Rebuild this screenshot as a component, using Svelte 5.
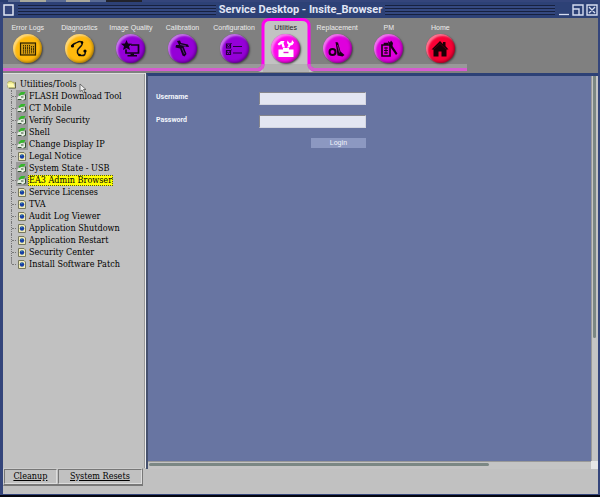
<script lang="ts">
  interface Tab {
    label: string;
    icon: string;
    tone: string;
  }

  interface Tool {
    label: string;
    launch: boolean;
  }

  const tabs: Tab[] = [
    { label: 'Error Logs', icon: 'logs', tone: 'amber' },
    { label: 'Diagnostics', icon: 'scope', tone: 'amber' },
    { label: 'Image Quality', icon: 'image', tone: 'violet' },
    { label: 'Calibration', icon: 'caliper', tone: 'violet' },
    { label: 'Configuration', icon: 'list', tone: 'violet' },
    { label: 'Utilities', icon: 'toolbox', tone: 'pink' },
    { label: 'Replacement', icon: 'wrench', tone: 'magenta' },
    { label: 'PM', icon: 'clipboard', tone: 'magenta' },
    { label: 'Home', icon: 'home', tone: 'red' }
  ];

  const tools: Tool[] = [
    { label: 'FLASH Download Tool', launch: true },
    { label: 'CT Mobile', launch: true },
    { label: 'Verify Security', launch: true },
    { label: 'Shell', launch: true },
    { label: 'Change Display IP', launch: true },
    { label: 'Legal Notice', launch: false },
    { label: 'System State - USB', launch: true },
    { label: 'EA3 Admin Browser', launch: true },
    { label: 'Service Licenses', launch: false },
    { label: 'TVA', launch: false },
    { label: 'Audit Log Viewer', launch: false },
    { label: 'Application Shutdown', launch: false },
    { label: 'Application Restart', launch: false },
    { label: 'Security Center', launch: false },
    { label: 'Install Software Patch', launch: false }
  ];

  let activeTab = $state('Utilities');
  let selected = $state('EA3 Admin Browser');
  let username = $state('');
  let password = $state('');

  function pick(event: MouseEvent, label: string) {
    event.preventDefault();
    selected = label;
  }
</script>

<div class="desktop-strip"></div>
<div class="window">
  <header class="titlebar">
    <div class="side">
      <button class="win-btn" aria-label="Window menu">
        <svg width="12" height="12" viewBox="0 0 12 12"><rect x="1" y="1" width="9" height="10" fill="#34457b" stroke="#e2e7f5" stroke-width="1.5" /></svg>
      </button>
      <span class="stripes"></span>
    </div>
    <h1>Service Desktop - Insite_Browser</h1>
    <div class="side">
      <span class="stripes"></span>
      <div class="win-group">
        <button class="win-btn" aria-label="Minimize">
          <svg width="12" height="12" viewBox="0 0 12 12"><path d="M1 10.5h10" stroke="#d5dcf0" stroke-width="1.3" /></svg>
        </button>
        <button class="win-btn" aria-label="Maximize">
          <svg width="12" height="12" viewBox="0 0 12 12"><path d="M1 1h10v10H1zM1 5h6v6" fill="none" stroke="#d5dcf0" stroke-width="1.4" /></svg>
        </button>
        <button class="win-btn" aria-label="Close">
          <svg width="12" height="12" viewBox="0 0 12 12"><path d="M1 1h10v10H1zM3 3l6 6M9 3l-6 6" fill="none" stroke="#d5dcf0" stroke-width="1.4" /></svg>
        </button>
      </div>
    </div>
  </header>

  <nav class="toolbar">
    <div class="tabs">
      {#each tabs as tab (tab.label)}
        <button class="tab" class:active={tab.label === activeTab} onclick={() => (activeTab = tab.label)}>
          {#if tab.label === activeTab}
            <svg class="tab-frame" viewBox="0 0 56 54" preserveAspectRatio="none">
              <path d="M0 54Q5 53 5 47V8Q5 1 12 1H44Q51 1 51 8V47Q51 53 56 54Z" fill="#c2c2c2" />
              <path d="M5 46H51V54H5Z" fill="#b2b2b2" />
              <path d="M0 51.5Q5 51 5 46V8Q5 1.5 12 1.5H44Q51 1.5 51 8V46Q51 51 56 51.5" fill="none" stroke="#ff00f0" stroke-width="3" />
              <path d="M0 51.5Q5 51 5 46M51 46Q51 51 56 51.5" fill="none" stroke="#d65bd0" stroke-width="3" />
            </svg>
          {/if}
          <span class="tab-label">{tab.label}</span>
          <span class="ball {tab.tone}">
            <svg width="20" height="20" viewBox="0 0 20 20">
              {#if tab.icon === 'logs'}
                <rect x="2.5" y="4" width="15" height="12" fill="#d29a12" stroke="#2b2000" stroke-width="1.2" />
                <path d="M5.500 6v8.500M7.500 6v8.500M9.500 6v8.500M11.500 6v8.500M13.500 7v7.500M15.500 7v7.500" stroke="#3b2c00" stroke-width="1" stroke-dasharray="1.5 .6 2.5 .6" />
              {:else if tab.icon === 'scope'}
                <path d="M3 7.500C3 4.500 6.500 4.500 8 3.500C11 1.500 14 2.500 13 5.500C12 8 9 9 8.500 11.500C8 14.500 9.500 16.500 12 16.500C15.500 17 17 15 16 12.500" fill="none" stroke="#111" stroke-width="1.5" />
                <circle cx="3.500" cy="7" r="1.600" /><circle cx="13" cy="3.500" r="1.300" /><circle cx="16" cy="12" r="1.600" /><circle cx="10.500" cy="16" r="1.300" />
              {:else if tab.icon === 'image'}
                <path d="M10 6H17.500V14H5V10.500" fill="none" stroke="#100018" stroke-width="1.7" />
                <path d="M5.500 1L7 4.500L11 4.800L8 7.200L9 11L5.500 9L2 11L3 7.200L0 4.800L4 4.500ZM9.500 14.500h3.500v1.500h3v1.500H6.500v-1.500h3Z" fill="#100018" />
              {:else if tab.icon === 'caliper'}
                <path d="M5 2L8 1.500L9 4L16 5.500L17 8L11.500 7.500L14.500 15L12.500 17.500L10.500 16.500L8 9.500L3.500 8.500L4 6L7 6Z" fill="#160022" />
                <path d="M10 9l2.500 6M8 5.500l6 1.500" stroke="#7c2eb0" stroke-width=".7" />
              {:else if tab.icon === 'list'}
                <path d="M2.500 5h4v4H2.500zM2.500 11.500h4v4H2.500zM9 7.500h9M9 14h9" fill="none" stroke="#21003a" stroke-width="1.200" />
                <path d="M3 6l1.500 2 3-4M3 12.500l1.500 2 3-4" fill="none" stroke="#21003a" stroke-width="1" />
              {:else if tab.icon === 'toolbox'}
                <path d="M2.500 10.500H7V9H13V10.500H17.500V18H2.500Z" fill="#fff" />
                <path d="M7.500 13.500h5" fill="none" stroke="#e216d2" stroke-width="1.400" />
                <path d="M1.500 5L5 2H8.500L7.500 4L9 8.500H6.500L5.500 5L3 6.500ZM11 8.500L12.500 6L11 4L11.500 1.500L13.500 4L15.500 3.500L16 1L18 3.500L16.500 6L14.500 6.500L13.500 8.500Z" fill="#fff" />
              {:else if tab.icon === 'wrench'}
                <circle cx="5.500" cy="13" r="3" fill="none" stroke="#180015" stroke-width="2" />
                <path d="M8.500 3L11 3.500L13.500 12.500L17.500 16L15.500 17.500L10.500 16.500L9.500 9Z" fill="#180015" />
                <path d="M10.500 6l2 7.500" stroke="#a1209a" stroke-width=".8" />
              {:else if tab.icon === 'clipboard'}
                <path d="M3 6h8v11H3zM5.500 4.500h3V6h-3z" fill="none" stroke="#180015" stroke-width="1.600" />
                <path d="M5 9h4M5 11.500h4M5 14h4M7 8v7" stroke="#180015" stroke-width=".9" />
                <path d="M9 2L11 3.500L12 1.500L14 4L13.500 7L18.500 14.500L17 16L12 9L9.500 5Z" fill="#180015" />
              {:else}
                <path d="M10 2L13 5V3H15.500V7L18.500 10.500H16.500V17.500H11.500V12.500H8.500V17.500H3.500V10.500H1.500Z" fill="#190005" />
                <path d="M4 10L10 4.500L16 10" fill="none" stroke="#7b0018" stroke-width=".5" />
              {/if}
            </svg>
          </span>
        </button>
      {/each}
    </div>
  </nav>

  <div class="workspace">
    <aside class="sidebar">
      <div class="tree">
        <div class="root">
          <svg width="9" height="9" viewBox="0 0 10 9"><path d="M1 8V2L2 1h3l1 1h2v2" fill="#e8e48a" stroke="#99984b" stroke-width=".8" /><path d="M0 3.500H7L9 8.500H2Z" fill="#fffcae" /><path d="M9.500 2v6.500H2" fill="none" stroke="#55552c" /></svg>
          <span>Utilities/Tools</span>
          <svg class="pointer" width="8" height="11" viewBox="0 0 8 11"><path d="M1 1V8.500L3 7L4.500 10L6 9.300L4.500 6.500H7Z" fill="#eee" stroke="#555" stroke-width=".8" /></svg>
        </div>
        <ul>
          {#each tools as tool (tool.label)}
            <li>
              <span class="glyph" class:launch={tool.launch}>
                {#if tool.launch}
                  <svg width="10" height="10" viewBox="0 0 10 10"><path d="M1 5.500L4 4L8 4.500V9L3 9L0 7.500Z" fill="#e5eee2" /><path d="M1.500 3.500L4 1H8.500L7 3.500L4 4L2.500 5Z" fill="#35b62b" /><path d="M8.500 3.500V8.500L6.500 9M1 8.500L4.500 8.500M4 6L6.500 6" fill="none" stroke="#345034" stroke-width="1" /></svg>
                {:else}
                  <svg width="8" height="9" viewBox="0 0 8 9"><path d="M.5.5H6L7.500 2V8.500H.5Z" fill="#f2edb8" stroke="#77775d" /><circle cx="4" cy="4.500" r="2.200" fill="#173ea5" /><path d="M3 3l1.500-.5L4 4Z" fill="#58c7a0" /></svg>
                {/if}
              </span>
              <a href="#tool" class:selected={tool.label === selected} onclick={(e) => pick(e, tool.label)}>{tool.label}</a>
            </li>
          {/each}
        </ul>
      </div>
      <div class="actions">
        <a href="#cleanup">Cleanup</a>
        <a href="#resets">System Resets</a>
      </div>
    </aside>

    <section class="main">
      <div class="frame">
        <form class="login" onsubmit={(e) => e.preventDefault()}>
          <label for="username">Username</label>
          <input id="username" type="text" bind:value={username} />
          <label for="password">Password</label>
          <input id="password" type="password" bind:value={password} />
          <button type="submit">Login</button>
        </form>
        <div class="vbar"><span></span></div>
        <div class="hbar"><span></span></div>
        <div class="corner"></div>
      </div>
    </section>
  </div>
</div>

<style>
  :global(body) {
    margin: 0;
    background: #05060f;
  }

  :global(#app) {
    display: flex;
    flex-direction: column;
    min-height: 100vh;
  }

  .desktop-strip {
    height: 2px;
    background: linear-gradient(90deg, #283c70 0 8px, #5a6b93 8px 20px, #a9a99b 20px 46px, #5a6b93 46px 66px, #aaa79b 66px 90px, #5a6b93 90px 106px, #22232c 106px 142px, #34457b 142px);
  }

  .window {
    flex: 1;
    display: flex;
    flex-direction: column;
    box-sizing: border-box;
    margin-bottom: 2px;
    border: solid #34457b;
    border-width: 0 2px 1px 3px;
    background: #c1c1c1;
  }

  button {
    padding: 0;
    border: 0;
    background: none;
  }

  .titlebar {
    display: grid;
    grid-template-columns: 1fr auto 1fr;
    align-items: center;
    height: 16px;
    background: #2d4176;
  }

  .titlebar h1 {
    margin: 0 3px;
    font: bold 11px/16px Roboto, "Liberation Sans", sans-serif;
    color: #e1e6f5;
  }

  .side {
    display: flex;
    align-items: center;
    gap: 3px;
  }

  .win-btn {
    width: 12px;
    height: 12px;
  }

  .win-btn svg {
    display: block;
  }

  .win-group {
    display: flex;
    gap: 2px;
  }

  .stripes {
    flex: 1;
    height: 10px;
    background: repeating-linear-gradient(#17213f 0 1px, #344880 1px 3px);
  }

  .toolbar {
    height: 55px;
    background: #808080;
    overflow: hidden;
  }

  .tabs {
    display: grid;
    grid-template-columns: repeat(9, 1fr);
    width: 78%;
    height: 54px;
    background: linear-gradient(transparent 46px, #999 46px 50px, #d65bd0 50px 53px, #808080 53px);
  }

  .tab {
    position: relative;
    display: flex;
    flex-direction: column;
    align-items: center;
    padding: 4px 2px 0 0;
    font: 7px/12px "Liberation Sans", Arial, sans-serif;
    color: #ececec;
  }

  .tab.active {
    color: #222;
  }

  .tab-frame {
    position: absolute;
    top: 0;
    left: -3px;
    width: 56px;
    height: 54px;
  }

  .tab-label {
    position: relative;
    white-space: nowrap;
  }

  .ball {
    position: relative;
    display: grid;
    place-items: center;
    width: 29px;
    height: 29px;
    border-radius: 50%;
    box-shadow: 1px 1px 2px #444, inset 2px 2px 2px #ffffff77, inset -1px -1px 3px #00000066;
  }

  .amber { background: #ffb90d; }
  .violet { background: #9500d8; }
  .pink { background: #ff08ed; }
  .magenta { background: #df00dd; }
  .red { background: #fa0035; }

  .workspace {
    flex: 1;
    display: grid;
    grid-template-columns: 143px 1fr;
  }

  .sidebar {
    display: flex;
    flex-direction: column;
    font: 9px/12px "DejaVu Serif Condensed", "DejaVu Serif", serif;
    color: #000;
  }

  .tree {
    flex: 1;
    padding: 4px 0 0 4px;
    border-top: 1px solid #ddd;
    border-right: 1px solid #eee;
    box-shadow: inset -1px 0 #999;
  }

  .root {
    display: flex;
    align-items: center;
    gap: 4px;
  }

  .pointer {
    margin: 4px 0 -4px -2px;
  }

  ul {
    margin: 0;
    padding: 0 0 0 4px;
    list-style: none;
  }

  li {
    display: flex;
    align-items: center;
    height: 12px;
    border-left: 1px dotted #777;
  }

  li:last-child {
    border-image: linear-gradient(#888 6px, transparent 6px) 1;
  }

  li::before {
    content: "";
    width: 4px;
    border-top: 1px dotted #777;
  }

  .glyph {
    display: grid;
    place-items: center;
    width: 12px;
    height: 12px;
  }

  .glyph.launch {
    background: #999;
  }

  li a {
    padding: 0 1px;
    line-height: 11px;
    color: #000;
    text-decoration: none;
    white-space: nowrap;
  }

  li a.selected {
    background: #ff0;
    outline: 1px dotted #55551c;
    outline-offset: -1px;
  }

  .actions {
    display: flex;
    gap: 1px;
    margin: 0 3px 8px 0;
    border: 1px outset #ccc;
    border-width: 1px 1px 2px;
  }

  .actions a {
    flex: 3 0 auto;
    border: 1px solid;
    border-color: #777 #ddd #ddd #777;
    line-height: 13px;
    text-align: center;
    color: #000;
  }

  .actions a:last-child {
    flex-grow: 4;
  }

  .main {
    display: flex;
    padding-bottom: 25px;
  }

  .frame {
    flex: 1;
    display: grid;
    grid-template: 1fr 8px / 1fr 7px;
    border-top: 3px solid #2d4176;
    border-left: 2px solid #46516f;
    background: #6875a2;
  }

  .login {
    display: grid;
    grid-template-columns: 103px 107px;
    grid-auto-rows: 13px;
    gap: 10px 0;
    align-content: start;
    padding: 16px 0 0 8px;
    font: bold 7px/10px Roboto, sans-serif;
    color: #f3f5fc;
  }

  .login input {
    box-sizing: border-box;
    width: 107px;
    height: 13px;
    padding: 0 2px;
    border: 1px solid;
    border-color: #86868c #d4d6e0 #d4d6e0 #86868c;
    background: #e3e6f2;
    font-size: 8px;
  }

  .login button {
    grid-column: 2;
    justify-self: end;
    width: 55px;
    height: 10px;
    background: #8c98c1;
    font: 7px/10px Roboto, sans-serif;
    color: #eef1fb;
  }

  .vbar {
    background: #c4c4c4;
    box-shadow: inset 1px 0 #999;
  }

  .vbar span {
    display: block;
    width: 3px;
    height: 68%;
    margin-left: 2px;
    border-radius: 0 0 2px 2px;
    background: #7b8784;
  }

  .hbar {
    padding: 2px 0 0 1px;
    background: #c4c4c4;
    box-shadow: inset 0 1px #999;
  }

  .hbar span {
    display: block;
    width: 77%;
    height: 3px;
    border-radius: 2px;
    background: #7b8784;
  }

  .corner {
    background: #e6e6e6;
  }
</style>
